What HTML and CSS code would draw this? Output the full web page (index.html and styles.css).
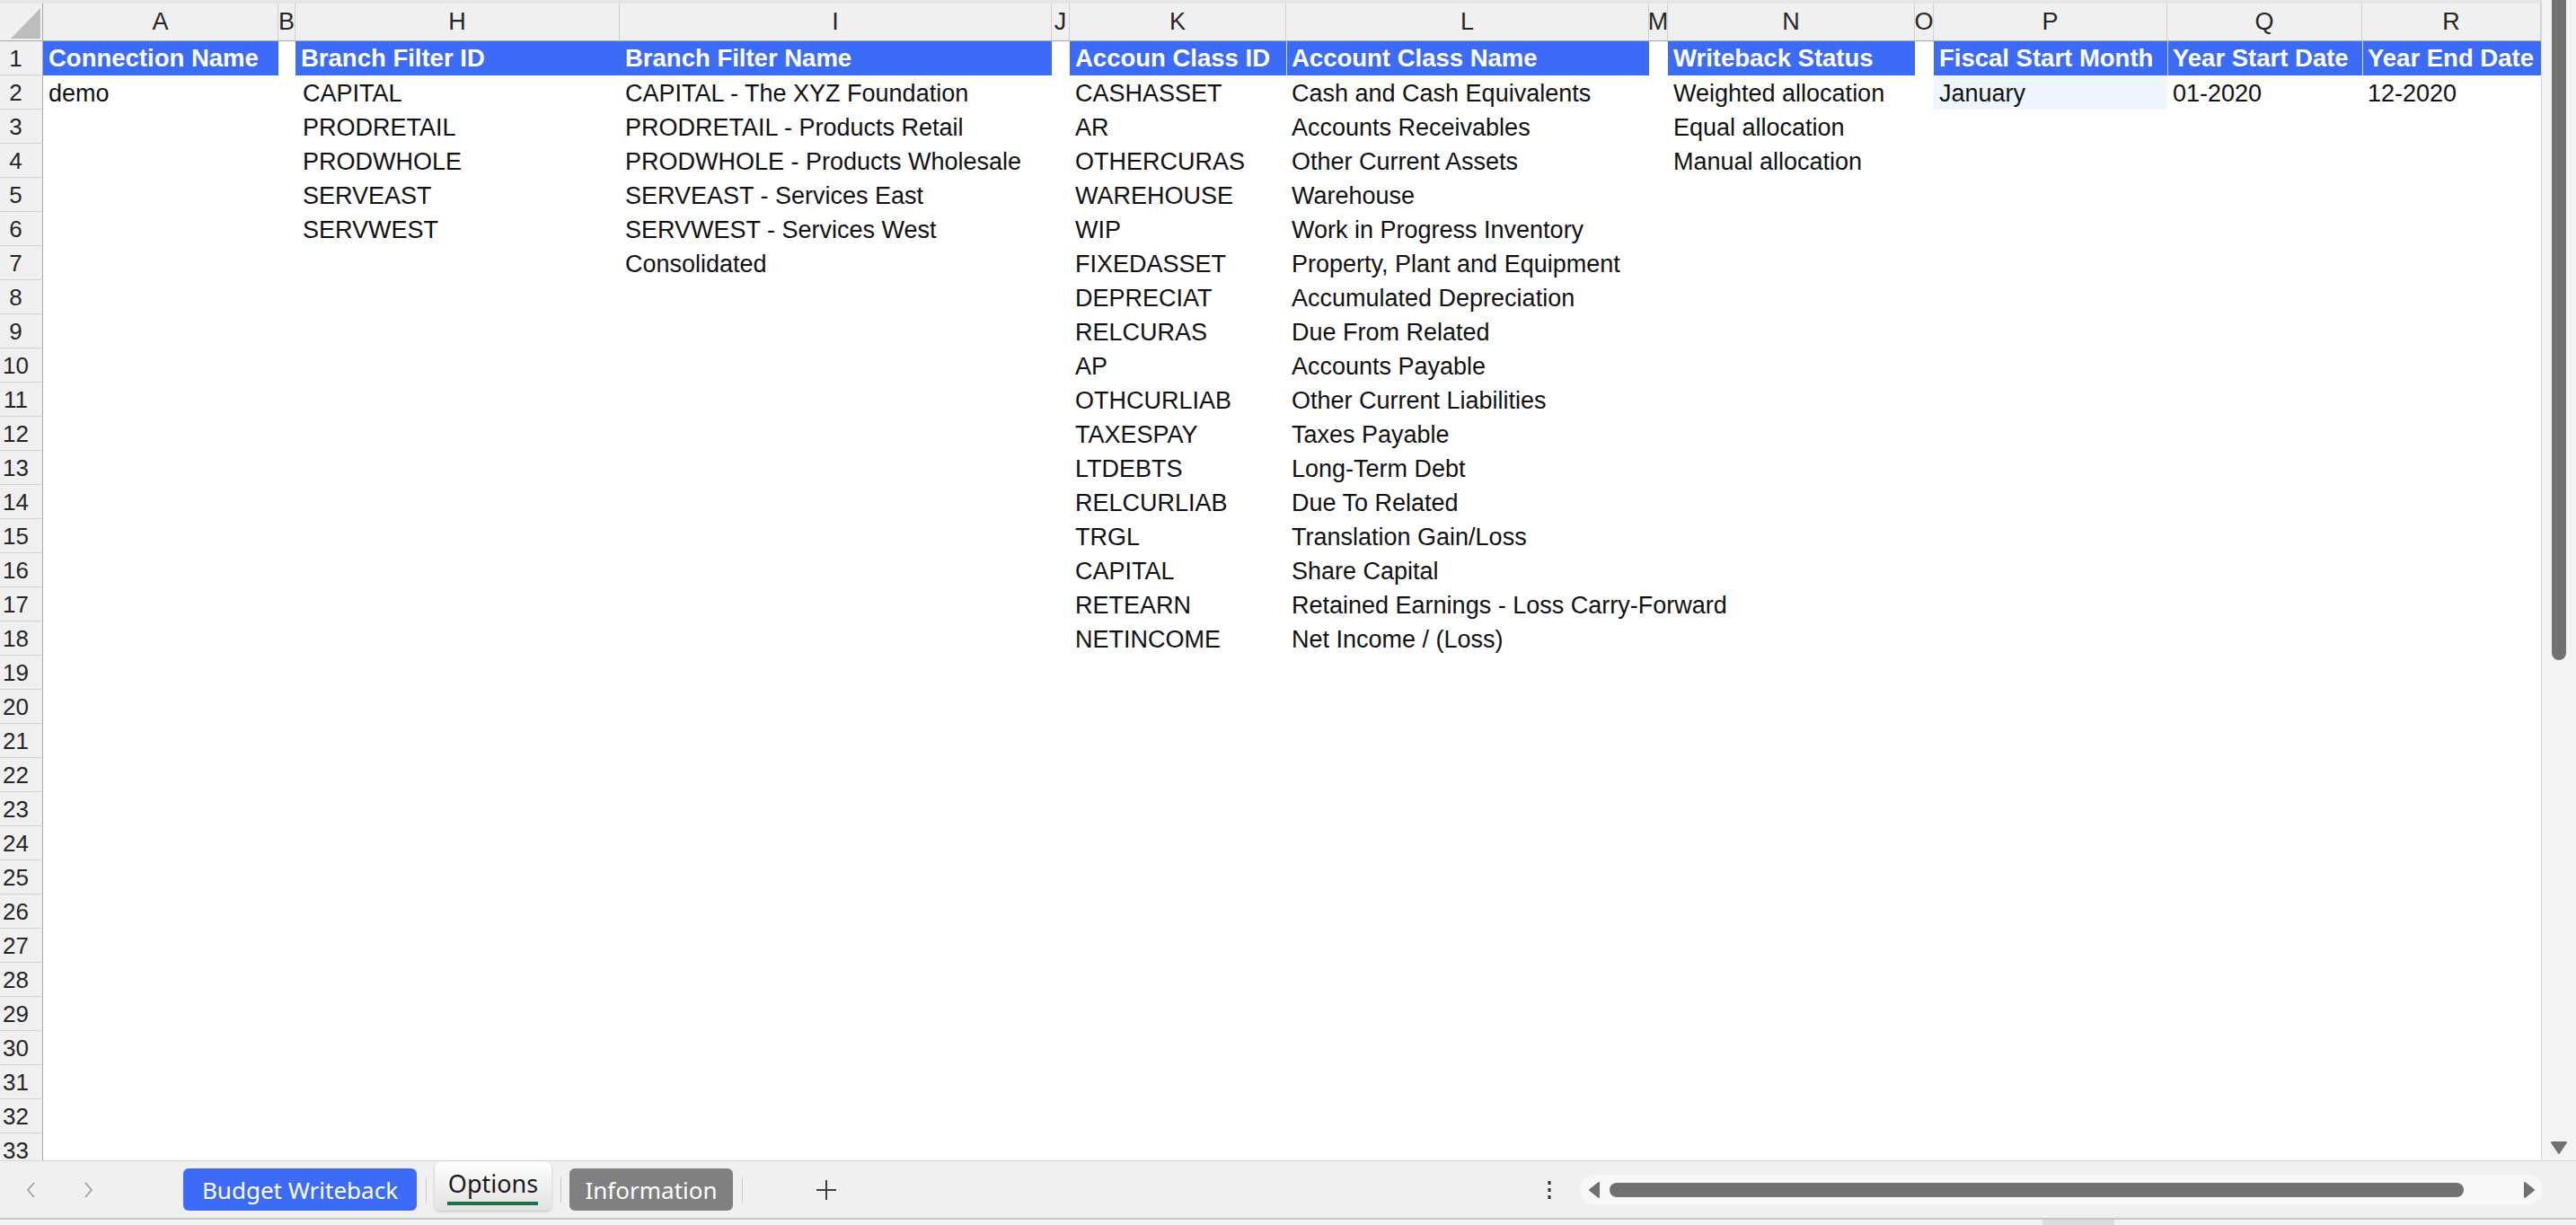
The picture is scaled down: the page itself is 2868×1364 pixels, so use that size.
FILE: index.html
```html
<!DOCTYPE html>
<html lang="en">
<head>
    <meta charset="UTF-8">
    <title>Options</title>
    <link rel="stylesheet" href="styles.css">
</head>
<body>
<div class="app">
    <div class="main">
        <div class="sheet">
            <div class="strip"></div>
            <div class="colhead">
                <div class="corner"><span class="tri"></span></div>
                <div class="letter">A</div>
                <div class="letter">B</div>
                <div class="letter">H</div>
                <div class="letter">I</div>
                <div class="letter">J</div>
                <div class="letter">K</div>
                <div class="letter">L</div>
                <div class="letter">M</div>
                <div class="letter">N</div>
                <div class="letter">O</div>
                <div class="letter">P</div>
                <div class="letter">Q</div>
                <div class="letter">R</div>
            </div>
            <div class="rows">
                <div class="row">
                    <div class="num">1</div>
                    <div class="cell hd ca">Connection Name</div>
                    <div class="cell hd ch">Branch Filter ID</div>
                    <div class="cell hd ci">Branch Filter Name</div>
                    <div class="cell hd ck">Accoun Class ID</div>
                    <div class="cell hd cl sep">Account Class Name</div>
                    <div class="cell hd cn">Writeback Status</div>
                    <div class="cell hd cp">Fiscal Start Month</div>
                    <div class="cell hd cq sep">Year Start Date</div>
                    <div class="cell hd cr sep">Year End Date</div>
                </div>
                <div class="row">
                    <div class="num">2</div>
                    <div class="cell ca">demo</div>
                    <div class="cell ch">CAPITAL</div>
                    <div class="cell ci">CAPITAL - The XYZ Foundation</div>
                    <div class="cell ck">CASHASSET</div>
                    <div class="cell cl">Cash and Cash Equivalents</div>
                    <div class="cell cn">Weighted allocation</div>
                    <div class="cell cp tint">January</div>
                    <div class="cell cq">01-2020</div>
                    <div class="cell cr">12-2020</div>
                </div>
                <div class="row">
                    <div class="num">3</div>
                    <div class="cell ch">PRODRETAIL</div>
                    <div class="cell ci">PRODRETAIL - Products Retail</div>
                    <div class="cell ck">AR</div>
                    <div class="cell cl">Accounts Receivables</div>
                    <div class="cell cn">Equal allocation</div>
                </div>
                <div class="row">
                    <div class="num">4</div>
                    <div class="cell ch">PRODWHOLE</div>
                    <div class="cell ci">PRODWHOLE - Products Wholesale</div>
                    <div class="cell ck">OTHERCURAS</div>
                    <div class="cell cl">Other Current Assets</div>
                    <div class="cell cn">Manual allocation</div>
                </div>
                <div class="row">
                    <div class="num">5</div>
                    <div class="cell ch">SERVEAST</div>
                    <div class="cell ci">SERVEAST - Services East</div>
                    <div class="cell ck">WAREHOUSE</div>
                    <div class="cell cl">Warehouse</div>
                </div>
                <div class="row">
                    <div class="num">6</div>
                    <div class="cell ch">SERVWEST</div>
                    <div class="cell ci">SERVWEST - Services West</div>
                    <div class="cell ck">WIP</div>
                    <div class="cell cl">Work in Progress Inventory</div>
                </div>
                <div class="row">
                    <div class="num">7</div>
                    <div class="cell ci">Consolidated</div>
                    <div class="cell ck">FIXEDASSET</div>
                    <div class="cell cl">Property, Plant and Equipment</div>
                </div>
                <div class="row">
                    <div class="num">8</div>
                    <div class="cell ck">DEPRECIAT</div>
                    <div class="cell cl">Accumulated Depreciation</div>
                </div>
                <div class="row">
                    <div class="num">9</div>
                    <div class="cell ck">RELCURAS</div>
                    <div class="cell cl">Due From Related</div>
                </div>
                <div class="row">
                    <div class="num">10</div>
                    <div class="cell ck">AP</div>
                    <div class="cell cl">Accounts Payable</div>
                </div>
                <div class="row">
                    <div class="num">11</div>
                    <div class="cell ck">OTHCURLIAB</div>
                    <div class="cell cl">Other Current Liabilities</div>
                </div>
                <div class="row">
                    <div class="num">12</div>
                    <div class="cell ck">TAXESPAY</div>
                    <div class="cell cl">Taxes Payable</div>
                </div>
                <div class="row">
                    <div class="num">13</div>
                    <div class="cell ck">LTDEBTS</div>
                    <div class="cell cl">Long-Term Debt</div>
                </div>
                <div class="row">
                    <div class="num">14</div>
                    <div class="cell ck">RELCURLIAB</div>
                    <div class="cell cl">Due To Related</div>
                </div>
                <div class="row">
                    <div class="num">15</div>
                    <div class="cell ck">TRGL</div>
                    <div class="cell cl">Translation Gain/Loss</div>
                </div>
                <div class="row">
                    <div class="num">16</div>
                    <div class="cell ck">CAPITAL</div>
                    <div class="cell cl">Share Capital</div>
                </div>
                <div class="row">
                    <div class="num">17</div>
                    <div class="cell ck">RETEARN</div>
                    <div class="cell cl">Retained Earnings - Loss Carry-Forward</div>
                </div>
                <div class="row">
                    <div class="num">18</div>
                    <div class="cell ck">NETINCOME</div>
                    <div class="cell cl">Net Income / (Loss)</div>
                </div>
                <div class="row"><div class="num">19</div></div>
                <div class="row"><div class="num">20</div></div>
                <div class="row"><div class="num">21</div></div>
                <div class="row"><div class="num">22</div></div>
                <div class="row"><div class="num">23</div></div>
                <div class="row"><div class="num">24</div></div>
                <div class="row"><div class="num">25</div></div>
                <div class="row"><div class="num">26</div></div>
                <div class="row"><div class="num">27</div></div>
                <div class="row"><div class="num">28</div></div>
                <div class="row"><div class="num">29</div></div>
                <div class="row"><div class="num">30</div></div>
                <div class="row"><div class="num">31</div></div>
                <div class="row"><div class="num">32</div></div>
                <div class="row"><div class="num">33</div></div>
            </div>
        </div>
        <div class="vscroll">
            <div class="vthumb"></div>
            <svg class="down" width="20" height="16" viewBox="0 0 20 16"><path d="M2 2 L18 2 L10 14 Z" fill="#707070" stroke="#707070" stroke-width="2" stroke-linejoin="round"/></svg>
        </div>
    </div>
    <div class="tabbar">
        <div class="nav">
            <svg width="14" height="18" viewBox="0 0 14 18"><polyline points="10,1 3,9 10,17" fill="none" stroke="#9a9a9a" stroke-width="1.6"/></svg>
        </div>
        <div class="nav">
            <svg width="14" height="18" viewBox="0 0 14 18"><polyline points="4,1 11,9 4,17" fill="none" stroke="#9a9a9a" stroke-width="1.6"/></svg>
        </div>
        <div class="tab blue">Budget Writeback</div>
        <div class="tabsep"></div>
        <div class="tab active">Options<span class="underline"></span></div>
        <div class="tabsep"></div>
        <div class="tab gray">Information</div>
        <div class="tabsep"></div>
        <div class="plus">
            <svg width="24" height="24" viewBox="0 0 24 24"><path d="M12 1 V23 M1 12 H23" stroke="#404040" stroke-width="2"/></svg>
        </div>
        <div class="spacer"></div>
        <div class="dots">
            <svg width="6" height="22" viewBox="0 0 6 22"><rect x="1.5" y="1" width="3" height="4" fill="#333"/><rect x="1.5" y="9" width="3" height="4" fill="#333"/><rect x="1.5" y="17" width="3" height="4" fill="#333"/></svg>
        </div>
        <div class="htrack">
            <svg width="16" height="20" viewBox="0 0 16 20"><path d="M13 2 L3 10 L13 18 Z" fill="#707070" stroke="#707070" stroke-width="2" stroke-linejoin="round"/></svg>
            <div class="hthumb"></div>
            <svg width="16" height="20" viewBox="0 0 16 20"><path d="M3 2 L13 10 L3 18 Z" fill="#707070" stroke="#707070" stroke-width="2" stroke-linejoin="round"/></svg>
        </div>
    </div>
    <div class="footer"><span class="grip"></span></div>
</div>
</body>
</html>
```

FILE: styles.css
```css
body {
    margin: 0;
    padding: 0;
    font-family: 'Liberation Sans', Arial, sans-serif;
    background-color: #fff;
    color: #1a1a1a;
}

.app {
    width: 2868px;
    height: 1364px;
    display: flex;
    flex-direction: column;
    overflow: hidden;
}

.main {
    height: 1292px;
    display: flex;
}

.sheet {
    width: 2829px;
    display: flex;
    flex-direction: column;
    overflow: hidden;
}

.strip {
    height: 4px;
    background-color: #e6e6e6;
    flex: none;
}

.colhead, .row {
    display: grid;
    grid-template-columns: 48px 262px 19px 361px 481px 20px 241px 404px 21px 275px 21px 260px 217px 199px;
}

.colhead {
    height: 42px;
    flex: none;
    background-color: #f0f0f0;
}

.corner {
    position: relative;
    border-right: 1px solid #a8a8a8;
    border-bottom: 1px solid #a8a8a8;
}

.corner .tri {
    position: absolute;
    left: 12px;
    top: 5px;
    width: 33px;
    height: 34px;
    background-color: #bdbdbd;
    clip-path: polygon(100% 0, 100% 100%, 0 100%);
}

.letter {
    display: flex;
    justify-content: center;
    align-items: center;
    overflow: hidden;
    font-size: 27px;
    color: #262626;
    border-right: 1px solid #cfcfcf;
    border-bottom: 1px solid #a8a8a8;
}

.rows {
    flex: none;
}

.row {
    height: 38px;
}

.num {
    grid-column: 1;
    box-sizing: border-box;
    height: 38px;
    padding-right: 12px;
    text-align: center;
    font-size: 26px;
    line-height: 39px;
    color: #262626;
    background-color: #f0f0f0;
    border-right: 1px solid #a8a8a8;
    border-bottom: 1px solid #d2d2d2;
}

.cell {
    grid-row: 1;
    height: 38px;
    box-sizing: border-box;
    padding-top: 1px;
    padding-left: 6px;
    font-size: 27px;
    line-height: 38px;
    white-space: nowrap;
    color: #111;
}

.cell.hd {
    background-color: #3c6cf7;
    color: #fff;
    font-size: 27.5px;
    font-weight: bold;
    overflow: hidden;
    padding-top: 0;
    padding-left: 6px;
}

.cell.hd.sep {
    border-left: 1px solid rgba(255, 255, 255, 0.75);
    padding-left: 5px;
}

.cell.tint {
    background-color: #eef5fe;
}

.ca { grid-column: 2; }
.ch { grid-column: 4; padding-left: 8px; }
.ci { grid-column: 5; }
.ck { grid-column: 7; }
.cl { grid-column: 8; }
.cn { grid-column: 10; }
.cp { grid-column: 12; }
.cq { grid-column: 13; }
.cr { grid-column: 14; }

.vscroll {
    width: 38px;
    border-left: 1px solid #d8d8d8;
    background-color: #f3f3f3;
    position: relative;
}

.vthumb {
    margin-left: 11px;
    width: 16px;
    height: 735px;
    background-color: #717171;
    border-radius: 0 0 8px 8px;
}

.down {
    position: absolute;
    left: 9px;
    top: 1270px;
}

.tabbar {
    height: 63px;
    border-top: 1px solid #d6d6d6;
    background-color: #f0f0f0;
    display: flex;
    align-items: center;
    font-family: 'Noto Sans', 'Open Sans', sans-serif;
    font-size: 26px;
    padding-left: 15px;
    padding-right: 37px;
}

.nav {
    width: 40px;
    display: flex;
    justify-content: center;
    margin-right: 23px;
}

.nav + .nav {
    margin-right: 86px;
}

.tab {
    height: 47px;
    border-radius: 6px;
    display: flex;
    align-items: center;
    justify-content: center;
    box-sizing: border-box;
}

.tab.blue {
    width: 260px;
    background-color: #3c6cf7;
    color: #fff;
}

.tab.gray {
    width: 182px;
    background-color: #808080;
    color: #fff;
}

.tab.active {
    width: 130px;
    height: 55px;
    align-self: flex-start;
    align-items: flex-start;
    padding-top: 6px;
    position: relative;
    color: #1a1a1a;
    font-size: 27px;
    background: linear-gradient(#ffffff, #e2e2e2);
    border-radius: 8px 8px 6px 6px;
    box-shadow: 0 1px 3px rgba(0, 0, 0, 0.22);
}

.underline {
    position: absolute;
    left: 14px;
    right: 15px;
    bottom: 6px;
    height: 4px;
    background-color: #1e7145;
}

.tabsep {
    width: 1px;
    height: 28px;
    background-color: #c8c8c8;
    margin: 0 9px 0 10px;
}

.plus {
    margin-left: 72px;
    display: flex;
}

.spacer {
    flex: 1;
}

.dots {
    width: 20px;
    display: flex;
    justify-content: center;
    margin-right: 24px;
}

.htrack {
    width: 1072px;
    height: 34px;
    flex: none;
    border-radius: 17px;
    background-color: #f7f7f7;
    display: flex;
    align-items: center;
    box-sizing: border-box;
    padding: 0 7px 0 8px;
}

.htrack svg {
    flex: none;
}

.hthumb {
    flex: none;
    width: 951px;
    height: 16px;
    margin: 0 65px 0 9px;
    background-color: #717171;
    border-radius: 8px;
}

.footer {
    height: 6px;
    border-top: 2px solid #c6c6c6;
    background-color: #f2f2f2;
}

.grip {
    display: block;
    width: 80px;
    height: 6px;
    margin-left: 2274px;
    background-color: #dcdcdc;
}
```
